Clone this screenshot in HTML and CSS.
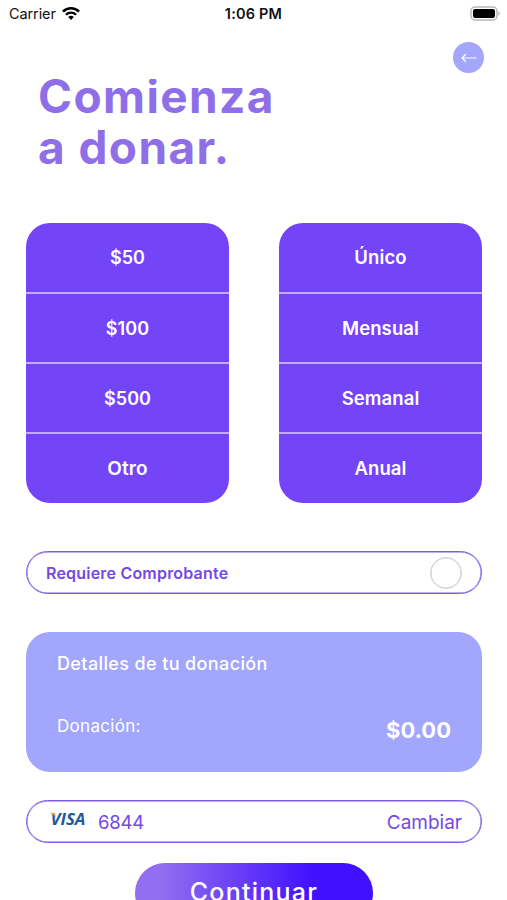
FILE: index.html
```html
<!DOCTYPE html>
<html lang="es">
<head>
    <meta charset="UTF-8">
    <meta name="viewport" content="width=device-width, initial-scale=1.0">
    <title>Comienza a donar</title>
    <link rel="stylesheet" href="styles.css">
</head>
<body>
    <div class="status-bar">
        <div class="carrier">
            <span>Carrier</span>
            <svg class="wifi" viewBox="0 0 18 13" width="18" height="13">
                <path d="M1 4.6a11.4 11.4 0 0 1 16 0" fill="none" stroke="#000" stroke-width="2.5"/>
                <path d="M3.9 7.7a7.2 7.2 0 0 1 10.2 0" fill="none" stroke="#000" stroke-width="2.2"/>
                <path d="M9 13L6.2 10.1a4 4 0 0 1 5.6 0z"/>
            </svg>
        </div>
        <div class="time">1:06 PM</div>
        <svg class="battery" viewBox="0 0 31 15" width="31" height="15">
            <rect x="1" y="1" width="26" height="13" rx="4" fill="#fff" stroke="#b5b5b5" stroke-width="1.4"/>
            <rect x="3" y="3" width="22" height="9" rx="2"/>
            <path d="M28.5 5.3q2.4 2.2 0 4.4z" fill="#aaa"/>
        </svg>
    </div>

    <header class="header">
        <button class="back" aria-label="Volver">
            <svg viewBox="0 0 16 10" width="16" height="10">
                <path d="M15.5 5H1.2M5 1L1 5l4 4" fill="none" stroke="#fff" stroke-width="1.2"/>
            </svg>
        </button>
    </header>

    <h1 class="title"><span class="first-line">Comienza</span><br><span class="second-line">a donar.</span></h1>

    <div class="options">
        <div class="option-list">
            <button class="option">$50</button>
            <button class="option">$100</button>
            <button class="option">$500</button>
            <button class="option">Otro</button>
        </div>
        <div class="option-list period">
            <button class="option">Único</button>
            <button class="option">Mensual</button>
            <button class="option">Semanal</button>
            <button class="option">Anual</button>
        </div>
    </div>

    <div class="pill receipt">
        <span class="receipt-label">Requiere Comprobante</span>
        <span class="check"></span>
    </div>

    <div class="details">
        <h2 class="details-title">Detalles de tu donación</h2>
        <div class="details-row">
            <span class="details-label">Donación:</span>
            <span class="amount">$0.00</span>
        </div>
    </div>

    <div class="pill card">
        <svg class="visa" viewBox="0 0 37 20" width="37" height="20">
            <text class="visa-text" x="1.5" y="15.5" textLength="35" lengthAdjust="spacingAndGlyphs">VISA</text>
            <path d="M.5 3.800h4.200q1.300 0 1.600 1.300l.6 3Q4.500 5 .5 3.800z" fill="#e9a04a"/>
        </svg>
        <span class="card-number">6844</span>
        <span class="change">Cambiar</span>
    </div>

    <button class="continue">Continuar</button>
</body>
</html>
```

FILE: styles.css
```css
* {
    box-sizing: border-box;
}
body {
    margin: 0;
    height: 900px;
    overflow: hidden;
    background: #fff;
    font-family: Inter, "Liberation Sans", sans-serif;
}
button {
    border: 0;
    padding: 0;
    font-family: inherit;
}
.status-bar {
    display: grid;
    grid-template-columns: 1fr auto 1fr;
    align-items: center;
    height: 27px;
    padding: 0 6px 0 9px;
    font-size: 14.5px;
    color: #111;
}
.carrier {
    display: flex;
    align-items: center;
    gap: 6px;
    letter-spacing: -0.1px;
}
.time {
    margin-right: 3px;
    font-weight: 600;
    letter-spacing: 0.2px;
}
.battery {
    justify-self: end;
}
.header {
    display: flex;
    justify-content: flex-end;
    height: 52px;
    padding: 15px 23px 0 0;
}
.back {
    display: flex;
    align-items: center;
    justify-content: center;
    width: 31px;
    height: 31px;
    border-radius: 50%;
    background: #a2a6fc;
}
/* the first line is cut by the top edge of its box */
.title {
    margin: 0 0 0 38px;
    height: 144px;
    overflow: hidden;
    font-size: 46px;
    font-weight: 700;
    line-height: 51px;
    letter-spacing: 1.4px;
    color: #8f6fe8;
}
.first-line,
.second-line {
    position: relative;
    top: -8px;
}
.options {
    display: flex;
    justify-content: space-between;
    padding: 0 25px 0 26px;
}
.option-list {
    display: flex;
    flex-direction: column;
    width: 203px;
    height: 280px;
    border-radius: 24px;
    overflow: hidden;
}
.option {
    height: 70px;
    border-top: 2px solid #c5abfc;
    background: #7444f9;
    color: #fff;
    font-size: 18px;
    font-weight: 600;
    letter-spacing: 0.1px;
}
.option:first-child {
    height: 69px;
    border-top: 0;
}
.option:last-child {
    height: 71px;
    font-size: 19px;
}
.period .option {
    padding-bottom: 1px;
    font-size: 18.5px;
}
.period .option:last-child {
    font-size: 18.5px;
}
.pill {
    display: flex;
    align-items: center;
    height: 43px;
    margin: 0 25px 0 26px;
    border: 1px solid #7d5ce6;
    border-radius: 22px;
    box-shadow: inset 0 0 0 0.5px #7d5ce6;
    color: #7448e6;
}
.receipt {
    justify-content: space-between;
    margin-top: 48px;
    padding: 0 19px;
}
.receipt-label {
    font-size: 16px;
    font-weight: 600;
    letter-spacing: 0.2px;
}
.check {
    width: 32px;
    height: 32px;
    border: 1px solid #cfcfd1;
    border-radius: 50%;
    box-shadow: inset 0 0 0 0.5px #cfcfd1;
}
.details {
    height: 140px;
    margin: 38px 25px 0 26px;
    padding: 20px 31px 0;
    border-radius: 24px;
    background: #a2a6fc;
    color: #fff;
}
.details-title {
    margin: 0;
    font-size: 18px;
    font-weight: 500;
    line-height: 24px;
    letter-spacing: 0.38px;
}
.details-row {
    display: flex;
    justify-content: space-between;
    margin-top: 38px;
}
.details-label {
    font-size: 17px;
    line-height: 24px;
    letter-spacing: 0.3px;
}
.amount {
    font-size: 22px;
    font-weight: 700;
    line-height: 33px;
}
.card {
    margin-top: 28px;
    padding: 1px 19px 0 22px;
}
.visa {
    margin-bottom: 6px;
}
.visa-text {
    font-family: "Open Sans", sans-serif;
    font-size: 16px;
    font-style: italic;
    font-weight: 700;
    fill: #1d5a9c;
}
.card-number {
    margin-left: 12px;
    font-size: 18.5px;
    letter-spacing: -0.2px;
}
.change {
    margin-left: auto;
    font-size: 19px;
}
.continue {
    display: block;
    width: 238px;
    height: 60px;
    margin: 20px 0 0 135px;
    padding-bottom: 2px;
    border-radius: 30px;
    background: linear-gradient(90deg, #926ff0 10%, #4010ff 75%);
    color: #fff;
    font-size: 25px;
    font-weight: 500;
    letter-spacing: 1.25px;
}
```
